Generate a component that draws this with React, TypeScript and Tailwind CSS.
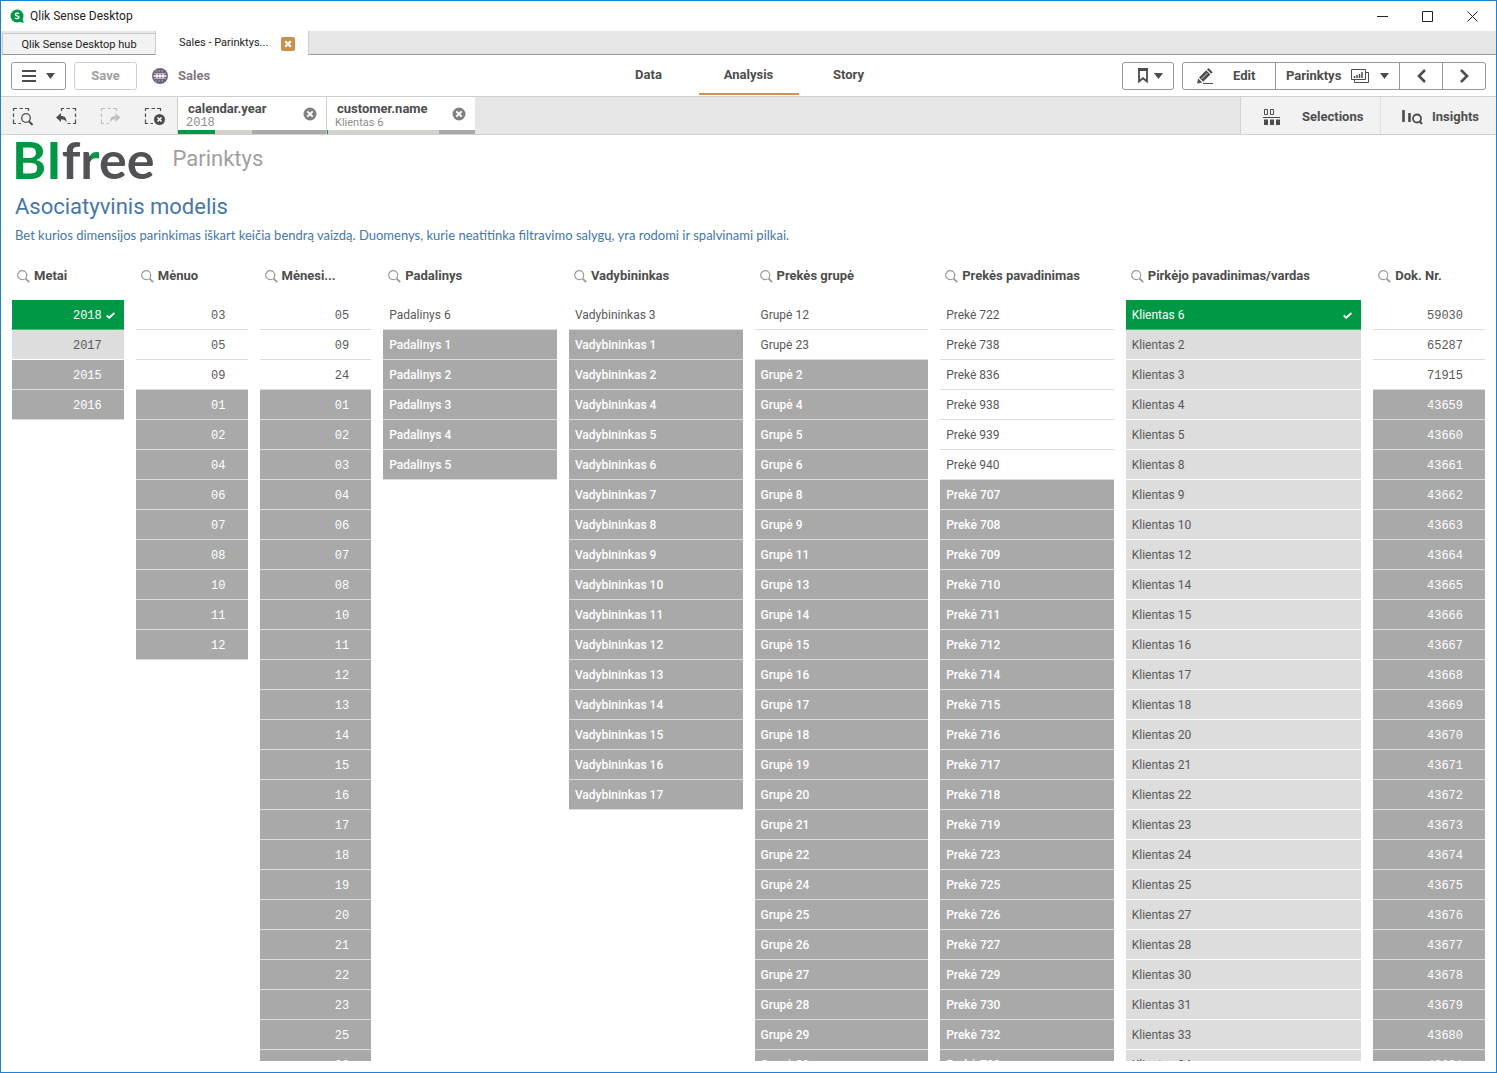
import React from "react";
import clsx from "clsx";

type State = "selected" | "possible" | "alternative" | "excluded";

type Column = {
  title: string;
  span: string;
  numeric?: boolean;
  prefix?: string;
  selected?: string[];
  possible?: string[];
  alternative?: string[];
  excluded?: string[];
};

const list = (text: string) => text.split(" ");

const columns: Column[] = [
  {
    title: "Metai",
    span: "col-span-2",
    numeric: true,
    selected: ["2018"],
    alternative: ["2017"],
    excluded: ["2015", "2016"],
  },
  {
    title: "Mėnuo",
    span: "col-span-2",
    numeric: true,
    possible: list("03 05 09"),
    excluded: list("01 02 04 06 07 08 10 11 12"),
  },
  {
    title: "Mėnesi...",
    span: "col-span-2",
    numeric: true,
    possible: list("05 09 24"),
    excluded: list(
      "01 02 03 04 06 07 08 10 11 12 13 14 15 16 17 18 19 20 21 22 23 25 26",
    ),
  },
  {
    title: "Padalinys",
    span: "col-span-3",
    prefix: "Padalinys ",
    possible: ["6"],
    excluded: list("1 2 3 4 5"),
  },
  {
    title: "Vadybininkas",
    span: "col-span-3",
    prefix: "Vadybininkas ",
    possible: ["3"],
    excluded: list("1 2 4 5 6 7 8 9 10 11 12 13 14 15 16 17"),
  },
  {
    title: "Prekės grupė",
    span: "col-span-3",
    prefix: "Grupė ",
    possible: list("12 23"),
    excluded: list(
      "2 4 5 6 8 9 11 13 14 15 16 17 18 19 20 21 22 24 25 26 27 28 29 30",
    ),
  },
  {
    title: "Prekės pavadinimas",
    span: "col-span-3",
    prefix: "Prekė ",
    possible: list("722 738 836 938 939 940"),
    excluded: list(
      "707 708 709 710 711 712 714 715 716 717 718 719 723 725 726 727 729 730 732 733",
    ),
  },
  {
    title: "Pirkėjo pavadinimas/vardas",
    span: "col-span-4",
    prefix: "Klientas ",
    selected: ["6"],
    alternative: list(
      "2 3 4 5 8 9 10 12 14 15 16 17 18 20 21 22 23 24 25 27 28 30 31 33 34",
    ),
  },
  {
    title: "Dok. Nr.",
    span: "col-span-2",
    numeric: true,
    possible: list("59030 65287 71915"),
    excluded: Array.from({ length: 23 }, (_, i) => String(43659 + i)),
  },
];

const stateStyles: Record<State, string> = {
  selected: "bg-[#009845] text-white border-[#4db87c]",
  possible: "bg-white text-[#595959] border-[#dcdcdc]",
  alternative: "bg-[#dddddd] text-[#595959] border-white",
  excluded: "bg-[#a9a9a9] text-white border-[#dcdcdc]",
};

const Caret = () => (
  <svg width="9" height="6" viewBox="0 0 9 6" fill="currentColor">
    <path d="M0 0h9L4.500 6z" />
  </svg>
);

const Check = () => (
  <svg width="9" height="7" viewBox="0 0 9 7" fill="none" stroke="currentColor" strokeWidth="1.800">
    <path d="M.7 3.500 3.200 5.700 8.400 1" />
  </svg>
);

const SearchIcon = () => (
  <svg width="13" height="13" viewBox="0 0 13 13" fill="none" stroke="#999" className="shrink-0">
    <circle cx="5.200" cy="5.200" r="4.500" strokeWidth="1.200" />
    <path d="m8.600 8.600 3.600 3.600" strokeWidth="1.800" />
  </svg>
);

const ClearIcon = () => (
  <svg width="14" height="14" viewBox="0 0 14 14">
    <circle cx="7" cy="7" r="6.500" fill="#808080" />
    <path d="m4.300 4.300 5.400 5.400m0-5.400L4.300 9.700" stroke="#fff" strokeWidth="1.900" />
  </svg>
);

const Row = ({ state, text, numeric }: { state: State; text: string; numeric?: boolean }) => (
  <li>
    <button
      className={clsx(
        "flex h-[30px] w-full items-center border-b pl-1.5 text-xs",
        stateStyles[state],
        numeric
          ? "justify-end gap-1 pt-0.5 font-['Liberation_Mono',monospace]"
          : "justify-between pt-px pr-[9px]",
        numeric && (state === "selected" ? "pr-[9px]" : "pr-[22px]"),
        state === "excluded" && !numeric && "font-medium",
      )}
    >
      <span>{text}</span>
      {state === "selected" && <Check />}
    </button>
  </li>
);

const ListBox = ({ column }: { column: Column }) => {
  const groups: [State, string[] | undefined][] = [
    ["selected", column.selected],
    ["possible", column.possible],
    ["alternative", column.alternative],
    ["excluded", column.excluded],
  ];
  return (
    <section className={clsx("flex min-h-0 flex-col", column.span)}>
      <h3 className="mb-2 flex h-8 shrink-0 items-center gap-1 pl-[5px] text-[13px] font-bold whitespace-nowrap text-[#4d4d4d]">
        <button aria-label={`Search ${column.title}`}>
          <SearchIcon />
        </button>
        {column.title}
      </h3>
      <ul className="min-h-0 flex-1 overflow-hidden">
        {groups.map(([state, values]) =>
          values?.map((value) => (
            <Row
              key={value}
              state={state}
              text={(column.prefix ?? "") + value}
              numeric={column.numeric}
            />
          )),
        )}
      </ul>
    </section>
  );
};

const TitleBar = () => (
  <header className="flex h-[30px] shrink-0 items-center justify-between pr-[18px] pl-[9px]">
    <div className="flex items-center gap-[5px] text-xs text-[#222]">
      <svg width="15" height="14" viewBox="0 0 15 14">
        <circle cx="7" cy="7" r="6.500" fill="#009845" />
        <path d="m9 11 3-2 2 4.500h-3z" fill="#009845" />
        <path
          d="M9 4.800C8.500 4 5.300 3.700 5.300 5.400c0 1.600 3.700 1.200 3.700 2.900 0 1.800-3.500 1.600-4.100.6"
          fill="none"
          stroke="#fff"
          strokeWidth="1.400"
        />
      </svg>
      <span>Qlik Sense Desktop</span>
    </div>
    <div className="flex items-center gap-[34px] text-[#222]">
      <button aria-label="Minimize">
        <svg width="11" height="11" viewBox="0 0 11 11" stroke="currentColor">
          <path d="M0 5.500h11" />
        </svg>
      </button>
      <button aria-label="Maximize">
        <svg width="11" height="11" viewBox="0 0 11 11" fill="none" stroke="currentColor">
          <path d="M.5.500h10v10H.5z" />
        </svg>
      </button>
      <button aria-label="Close">
        <svg width="11" height="11" viewBox="0 0 11 11" stroke="currentColor">
          <path d="m.5.500 10 10m0-10-10 10" />
        </svg>
      </button>
    </div>
  </header>
);

const WindowTabs = () => (
  <nav className="flex h-6 shrink-0 bg-[#e6e6e6] text-[11px] text-[#222]">
    <button className="mt-0.5 ml-px w-[153px] border-t border-b border-l border-t-[#ccc] border-b-[#999] border-l-[#ccc] bg-[#f2f2f2] pt-0.5">
      Qlik Sense Desktop hub
    </button>
    <div className="flex w-[154px] items-center justify-between border-x border-[#ccc] bg-white pt-px pr-[13px] pl-[23px]">
      <span>Sales - Parinktys...</span>
      <button aria-label="Close tab">
        <svg width="14" height="14" viewBox="0 0 14 14">
          <rect width="14" height="14" rx="2" fill="#cc8f4e" />
          <path d="m4.200 4.200 5.600 5.600m0-5.600L4.200 9.800" stroke="#fff" strokeWidth="2.200" />
        </svg>
      </button>
    </div>
    <div className="flex-1 border-b border-[#999]" />
  </nav>
);

const Toolbar = () => (
  <div className="grid h-[42px] shrink-0 grid-cols-[1fr_auto_1fr] border-b border-[#cfcfca] px-2.5 text-[13px] font-bold text-[#4d4d4d]">
    <div className="flex items-center">
      <button
        aria-label="Menu"
        className="flex h-7 w-[55px] items-center justify-center gap-2.5 rounded-[3px] border border-[#999]"
      >
        <svg width="14" height="12" viewBox="0 0 14 12" stroke="currentColor" strokeWidth="2">
          <path d="M0 1h14M0 6h14M0 11h14" />
        </svg>
        <Caret />
      </button>
      <button className="ml-2 h-7 w-[63px] rounded-[3px] border border-[#cfcfca] text-[#a0a0a0]">
        Save
      </button>
      <svg width="16" height="16" viewBox="0 0 16 16" className="mr-2.5 ml-[15px]">
        <circle cx="8" cy="8" r="8" fill="#6e6478" />
        <path d="M2 5.500h12M2 10.500h12" stroke="#b9b3c4" />
        <path d="M1.500 8h13M5 6v4m3-4v4m3-4v4" stroke="#fff" strokeWidth="1.300" />
        <path d="M3.500 3h9m-9 10h9" stroke="#b9b3c4" strokeDasharray="1.500 1.500" />
      </svg>
      <span className="text-[#7f7a80]">Sales</span>
    </div>
    <nav className="flex pb-px">
      <a href="#data" className="flex w-[100px] items-center justify-center">
        Data
      </a>
      <a
        href="#analysis"
        className="flex w-[100px] items-center justify-center border-b-2 border-[#cc9352] pt-0.5"
      >
        Analysis
      </a>
      <a href="#story" className="flex w-[100px] items-center justify-center">
        Story
      </a>
    </nav>
    <div className="flex items-center justify-end gap-2">
      <button
        aria-label="Bookmarks"
        className="flex h-7 w-[52px] items-center justify-center gap-1.5 rounded-[3px] border border-[#999] pl-1"
      >
        <svg width="10" height="15" viewBox="0 0 10 15" fill="none" stroke="currentColor">
          <path d="M1 1.500h8v12L5 10.200 1 13.500z" strokeWidth="1.800" />
          <path d="M0 1.500h10" strokeWidth="3" />
        </svg>
        <Caret />
      </button>
      <div className="flex h-7 divide-x divide-[#999] rounded-[3px] border border-[#999]">
        <button className="flex w-[93px] items-center gap-5 pl-[14px]">
          <svg width="16" height="16" viewBox="0 0 16 16" fill="currentColor">
            <path d="m0 15.500 1.200-5 4 4zM2 9.500 9.200 2.300l4.200 4.200-7.200 7.200zM10 1.500 11.500 0l4.200 4.200-1.500 1.500z" />
            <path d="M6 15h10v1H6z" />
            <path d="m4.500 11 6-6" stroke="#fff" strokeWidth=".8" />
          </svg>
          Edit
        </button>
        <button className="flex w-[124px] items-center gap-2.5 pl-2.5">
          Parinktys
          <svg width="19" height="14" viewBox="0 0 19 14" fill="none" stroke="currentColor">
            <path d="M.5.500h14v10H.5zM15 3.500h2.500v10H3.500V11" />
            <path d="M3.500 9V7m2.500 2V6m2.500 3V5m2.500 4V3" strokeWidth="1.500" />
          </svg>
          <Caret />
        </button>
        <button aria-label="Previous sheet" className="flex w-[43px] items-center justify-center">
          <svg width="9" height="14" viewBox="0 0 9 14" fill="none" stroke="currentColor" strokeWidth="2.600">
            <path d="M8 1 2 7l6 6" />
          </svg>
        </button>
        <button aria-label="Next sheet" className="flex w-[42px] items-center justify-center">
          <svg width="9" height="14" viewBox="0 0 9 14" fill="none" stroke="currentColor" strokeWidth="2.600">
            <path d="m1 1 6 6-6 6" />
          </svg>
        </button>
      </div>
    </div>
  </div>
);

const Dashes = () => (
  <path
    d="M1.500 4V1.500H5M7.500 1.500h3.500M13 1.500h3.500V4M1.500 6.500V10M1.500 12.500v4H4M6.500 16.500H9"
    strokeWidth="1.200"
  />
);

const tools = [
  {
    label: "Smart search",
    color: "text-[#4d4d4d]",
    icon: (
      <>
        <Dashes />
        <circle cx="14" cy="11" r="4.300" strokeWidth="1.300" />
        <path d="m17 14.500 3.500 3.500" strokeWidth="2" />
      </>
    ),
  },
  {
    label: "Step back",
    color: "text-[#4d4d4d]",
    icon: (
      <>
        <path
          d="M5.500 4V1.500H8M10.500 1.500H14M16.500 1.500h3V4M19.500 6.500V10M19.500 12.500v4H17M14.500 16.500H11.500"
          strokeWidth="1.200"
        />
        <path d="M0 10.500 5 6v3c4 0 5.500 2 5.500 6.500C9.500 13 8 12.200 5 12.200V15z" fill="currentColor" stroke="none" />
      </>
    ),
  },
  {
    label: "Step forward",
    color: "text-[#c0c0c0]",
    icon: (
      <>
        <Dashes />
        <path d="M20.500 10.500 15.500 6v3c-4 0-5.500 2-5.500 6.500 1-2.500 2.500-3.300 5.500-3.300V15z" fill="currentColor" stroke="none" />
      </>
    ),
  },
  {
    label: "Clear all selections",
    color: "text-[#4d4d4d]",
    icon: (
      <>
        <Dashes />
        <circle cx="15.500" cy="12.500" r="5.500" fill="currentColor" stroke="none" />
        <path d="m13.500 10.500 4 4m0-4-4 4" stroke="#fff" strokeWidth="1.600" />
      </>
    ),
  },
];

const selections = [
  { field: "calendar.year", value: "2018", mono: true, bars: [37, 37, 75] },
  { field: "customer.name", value: "Klientas 6", mono: false, bars: [1, 112, 36] },
];

const SelectionBar = () => (
  <div className="flex h-[38px] shrink-0 border-b border-[#d2d2d2] bg-[#e6e6e6] text-[#4d4d4d]">
    <div className="flex bg-[#f2f2f2]">
      {tools.map((tool) => (
        <button
          key={tool.label}
          aria-label={tool.label}
          className={clsx("flex w-11 items-center justify-center pt-0.5 pr-0.5", tool.color)}
        >
          <svg width="21" height="19" viewBox="0 0 21 19" fill="none" stroke="currentColor">
            {tool.icon}
          </svg>
        </button>
      ))}
    </div>
    {selections.map((item) => (
      <div key={item.field} className="flex w-[149px] flex-col border-l border-[#cfcfca] bg-white">
        <div className="flex flex-1 items-center justify-between pr-[9px] pl-2">
          <div className="pt-1">
            <p className="pl-0.5 text-[13px] leading-[14px] font-bold">{item.field}</p>
            <p
              className={clsx(
                "leading-[14px] text-[#8c8c8c]",
                item.mono ? "font-['Liberation_Mono',monospace] text-xs" : "text-[11px]",
              )}
            >
              {item.value}
            </p>
          </div>
          <button aria-label={`Clear ${item.field}`}>
            <ClearIcon />
          </button>
        </div>
        <div className="flex h-1">
          <div className="bg-[#009845]" style={{ flexGrow: item.bars[0] }} />
          <div className="bg-[#d2d2cd]" style={{ flexGrow: item.bars[1] }} />
          <div className="bg-[#a9a9a9]" style={{ flexGrow: item.bars[2] }} />
        </div>
      </div>
    ))}
    <div className="flex-1" />
    <button className="flex w-[140px] items-center gap-[21px] border-l border-[#d2d2d2] bg-[#f2f2f2] pt-0.5 pl-[22px] text-[13px] font-bold">
      <svg width="18" height="16" viewBox="0 0 18 16" fill="currentColor">
        <path d="M1.500.500h3v5h-3zM7.500.500h3v5h-3z" fill="none" stroke="currentColor" />
        <path d="M0 8h17v1H0zM1 10.500h4V16H1zM7 10.500h4V16H7zM13 10.500h4V16h-4z" />
      </svg>
      Selections
    </button>
    <button className="flex w-[116px] items-center gap-[9px] border-l border-[#e0e0e0] bg-[#f2f2f2] pt-0.5 pl-[21px] text-[13px] font-bold">
      <svg width="21" height="16" viewBox="0 0 21 16" fill="none" stroke="currentColor">
        <path d="M1.500 1v12M7.500 4v9" strokeWidth="2.600" />
        <circle cx="15" cy="9.500" r="4" strokeWidth="1.800" />
        <path d="m17.500 12 2.500 3" strokeWidth="2" />
      </svg>
      Insights
    </button>
  </div>
);

const Logo = () => (
  <div className="flex font-['Lato',sans-serif] text-[52px] leading-10 font-bold text-[#545156]">
    <span className="text-[#009845]">BI</span>
    <span>
      f
      <span className="bg-linear-to-r from-[#545156] from-60% to-[#009845] to-60% bg-clip-text text-transparent">
        r
      </span>
      ee
    </span>
  </div>
);

const App = () => {
  return (
    <div className="flex h-screen flex-col overflow-hidden border border-[#1883d7] bg-white font-['Roboto',sans-serif]">
      <TitleBar />
      <WindowTabs />
      <Toolbar />
      <SelectionBar />
      <main className="flex min-h-0 flex-1 flex-col px-[11px] pb-[11px]">
        <div className="flex shrink-0 items-start gap-[18px] pt-1">
          <Logo />
          <h1 className="text-[22px] leading-10 text-[#a0a0a0]">Parinktys</h1>
        </div>
        <h2 className="mt-3 pl-[3px] text-[22px] leading-8 text-[#4477aa]">
          Asociatyvinis modelis
        </h2>
        <p className="mt-1 pl-[3px] font-['Lato',sans-serif] text-[13px] leading-4 text-[#4477aa]">
          Bet kurios dimensijos parinkimas iškart keičia bendrą vaizdą. Duomenys, kurie neatitinka
          filtravimo salygų, yra rodomi ir spalvinami pilkai.
        </p>
        <div className="mt-[17px] grid min-h-0 flex-1 grid-cols-24 grid-rows-1 gap-3">
          {columns.map((column) => (
            <ListBox key={column.title} column={column} />
          ))}
        </div>
      </main>
    </div>
  );
};

export default App;
